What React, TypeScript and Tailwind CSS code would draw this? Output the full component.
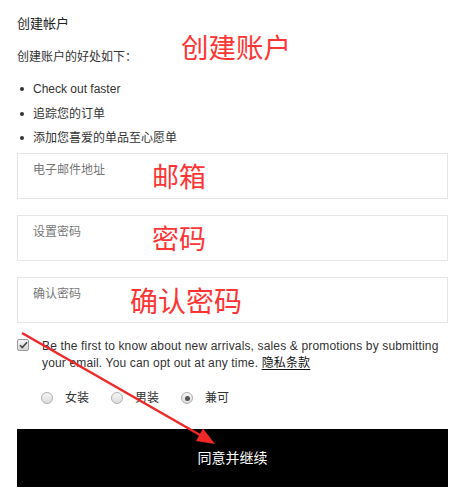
import React from "react";

function Checkbox() {
  return (
    <span className="mt-[1px] flex h-[12px] w-[12px] shrink-0 items-center justify-center rounded-[2px] border border-[#9a9a9a] bg-gradient-to-b from-[#f4f4f4] to-[#d8d8d8]">
      <svg width="9" height="8" viewBox="0 0 9 8">
        <path d="M1 4.2 L3.3 6.5 L8 1.3" fill="none" stroke="#444" strokeWidth="1.6" />
      </svg>
    </span>
  );
}

function Radio({ checked }: { checked?: boolean }) {
  return (
    <span className="flex h-[12px] w-[12px] shrink-0 items-center justify-center rounded-full border border-[#b0b0b0] bg-gradient-to-b from-[#f6f6f6] to-[#dcdcdc]">
      {checked && <span className="h-[5px] w-[5px] rounded-full bg-[#555]" />}
    </span>
  );
}

export default function App() {
  const bullets = ["Check out faster", "追踪您的订单", "添加您喜爱的单品至心愿单"];
  const fields = ["电子邮件地址", "设置密码", "确认密码"];
  return (
    <div className="relative h-[498px] w-[464px] overflow-hidden bg-white font-['Liberation_Sans','Noto_Sans_CJK_SC',sans-serif] text-[12px] text-[#333]">
      <div className="flex flex-col pl-[17px] pr-[16px] pt-[15px]">
        <div className="text-[13px] leading-[18px] text-[#222]">创建帐户</div>
        <div className="mt-[15px] leading-[18px]">创建账户的好处如下：</div>
        <ul className="mt-[11px] flex flex-col">
          {bullets.map((b) => (
            <li key={b} className="flex h-[24.5px] items-center">
              <span className="ml-[3px] h-[4px] w-[4px] rounded-full bg-[#333]" />
              <span className="ml-[9px] text-[#333]">{b}</span>
            </li>
          ))}
        </ul>
        <div className="mt-[2.5px] flex flex-col gap-[16px]">
          {fields.map((f) => (
            <div key={f} className="h-[46px] border border-[#e6e6e6] pl-[15px] pt-[7px]">
              <span className="leading-[16px] text-[#777]">{f}</span>
            </div>
          ))}
        </div>
        <div className="mt-[15px] flex items-start gap-[13px]">
          <Checkbox />
          <p className="leading-[17px] tracking-[0.15px] text-[#333]">
            Be the first to know about new arrivals, sales &amp; promotions by submitting your email. You can
            opt out at any time. <span className="text-[#111] underline underline-offset-2">隐私条款</span>
          </p>
        </div>
        <div className="ml-[24px] mt-[18px] flex h-[16px] items-center">
          <Radio />
          <span className="ml-[12px]">女装</span>
          <span className="ml-[22px]" />
          <Radio />
          <span className="ml-[12px]">男装</span>
          <span className="ml-[22px]" />
          <Radio checked />
          <span className="ml-[12px]">兼可</span>
        </div>
        <button className="mt-[23px] flex h-[58px] items-center justify-center bg-black text-[14px] text-white">
          同意并继续
        </button>
      </div>

      <div className="absolute left-[181px] top-[28px] text-[27.5px] leading-[36px] text-[#ff3535] font-['Noto_Sans_CJK_SC',sans-serif]">
        创建账户
      </div>
      <div className="absolute left-[152px] top-[158px] text-[27px] leading-[36px] text-[#ff3535] font-['Noto_Sans_CJK_SC',sans-serif]">
        邮箱
      </div>
      <div className="absolute left-[152px] top-[220px] text-[27px] leading-[36px] text-[#ff3535] font-['Noto_Sans_CJK_SC',sans-serif]">
        密码
      </div>
      <div className="absolute left-[130px] top-[282px] text-[28px] leading-[36px] text-[#ff3535] font-['Noto_Sans_CJK_SC',sans-serif]">
        确认密码
      </div>

      <svg className="pointer-events-none absolute left-0 top-0" width="464" height="498" viewBox="0 0 464 498">
        <line x1="22" y1="333" x2="200" y2="435" stroke="#f02828" strokeWidth="2.5" />
        <polygon points="215,444 196,441 203,428.5" fill="#f02828" />
      </svg>
    </div>
  );
}
